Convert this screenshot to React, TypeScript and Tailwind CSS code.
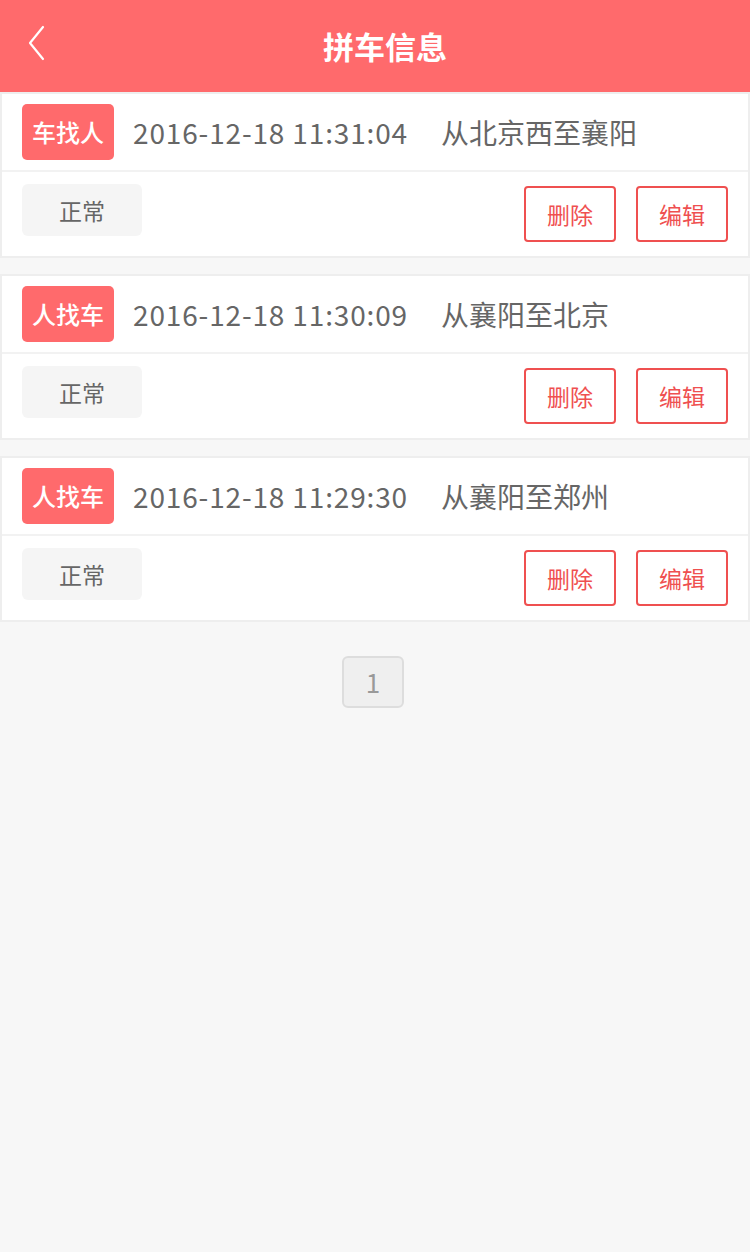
import React from "react";

const font = { fontFamily: '"Noto Sans CJK SC", "Noto Sans", sans-serif' };

const items = [
  { tag: "车找人", time: "2016-12-18 11:31:04", route: "从北京西至襄阳" },
  { tag: "人找车", time: "2016-12-18 11:30:09", route: "从襄阳至北京" },
  { tag: "人找车", time: "2016-12-18 11:29:30", route: "从襄阳至郑州" },
];

export default function App() {
  return (
    <div className="w-[750px] h-[1252px] bg-[#f7f7f7] flex flex-col" style={font}>
      <div className="h-[92px] bg-[#ff6a6c] flex items-center relative shrink-0">
        <svg className="absolute left-[26px] top-[25px]" width="22" height="36" viewBox="0 0 22 36">
          <path d="M17 2 L4 18 L17 34" fill="none" stroke="#fff" strokeWidth="2.2" strokeLinecap="round" strokeLinejoin="round" />
        </svg>
        <div className="flex-1 text-center pl-[20px] text-white text-[31px] font-bold leading-none -mt-[2px]">拼车信息</div>
      </div>
      <div className="flex flex-col gap-[16px]">
        {items.map((it, i) => (
          <div key={i} className="bg-white border-2 border-[#eeeeee] flex flex-col">
            <div className="h-[78px] flex items-center pl-[20px] border-b-2 border-[#f2f2f2]">
              <div className="w-[92px] h-[56px] rounded-[5px] bg-[#ff6a6c] text-white text-[24px] font-medium flex items-center justify-center leading-none">{it.tag}</div>
              <div className="ml-[19px] text-[28px] tracking-[0.85px] text-[#666666] leading-none">{it.time}</div>
              <div className="ml-[33px] text-[28px] text-[#666666] leading-none">{it.route}</div>
            </div>
            <div className="h-[84px] flex items-start px-[20px]">
              <div className="mt-[12px] w-[120px] h-[52px] rounded-[6px] bg-[#f5f5f5] text-[#666666] text-[23px] flex items-center justify-center leading-none">正常</div>
              <div className="flex-1" />
              <div className="mt-[14px] w-[92px] h-[56px] rounded-[4px] border-2 border-[#ef5050] text-[#ef5050] text-[23px] flex items-center justify-center leading-none">删除</div>
              <div className="ml-[20px] mt-[14px] w-[92px] h-[56px] rounded-[4px] border-2 border-[#ef5050] text-[#ef5050] text-[23px] flex items-center justify-center leading-none">编辑</div>
            </div>
          </div>
        ))}
      </div>
      <div className="flex justify-center mt-[34px] pr-[4px]">
        <div className="w-[62px] h-[52px] rounded-[6px] border-2 border-[#dddddd] bg-[#efefef] text-[#999999] text-[26px] flex items-center justify-center leading-none">1</div>
      </div>
    </div>
  );
}
